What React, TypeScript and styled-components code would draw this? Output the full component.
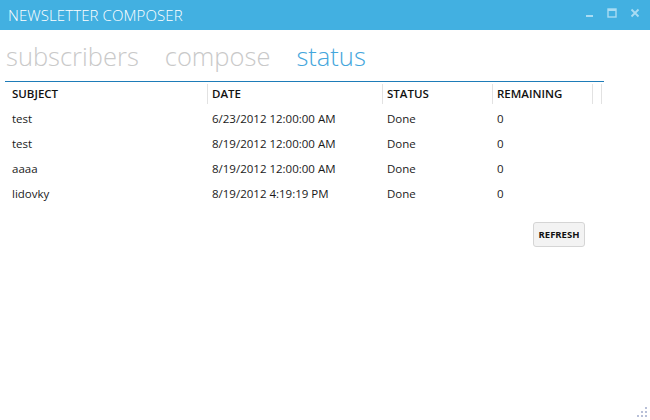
import styled, { createGlobalStyle } from 'styled-components';

const GlobalStyle = createGlobalStyle`
  html, body { margin: 0; padding: 0; background: #fff; }
  body { font-family: "Open Sans", "DejaVu Sans", sans-serif; }
`;

const rows = [
    { subject: 'test', date: '6/23/2012 12:00:00 AM', status: 'Done', remaining: '0' },
    { subject: 'test', date: '8/19/2012 12:00:00 AM', status: 'Done', remaining: '0' },
    { subject: 'aaaa', date: '8/19/2012 12:00:00 AM', status: 'Done', remaining: '0' },
    { subject: 'lidovky', date: '8/19/2012 4:19:19 PM', status: 'Done', remaining: '0' },
];

const columns = ['SUBJECT', 'DATE', 'STATUS', 'REMAINING', ''];

function WindowControls() {
    return <Controls>
        <svg width="10" height="10" viewBox="0 0 10 10">
            <rect x="2" y="7" width="7" height="2" fill="#a9dcf3" />
        </svg>
        <svg width="10" height="10" viewBox="0 0 10 10">
            <rect x="1" y="1" width="8" height="8" fill="none" stroke="#a9dcf3" strokeWidth="1.4" />
            <rect x="1" y="1" width="8" height="2" fill="#a9dcf3" />
        </svg>
        <svg width="10" height="10" viewBox="0 0 10 10">
            <path d="M1.5 1.5 L8.5 8.5 M8.5 1.5 L1.5 8.5" stroke="#a9dcf3" strokeWidth="1.8" />
        </svg>
    </Controls>
}

function ResizeGrip() {
    const dots = [[9, 1], [9, 5], [5, 5], [9, 9], [5, 9], [1, 9]];
    return <Grip width="12" height="12" viewBox="0 0 12 12">
        {dots.map(([x, y], i) => <rect key={i} x={x} y={y} width="2" height="2" fill="#b8c0d8" />)}
    </Grip>
}

export default function App() {
    return <Window>
        <GlobalStyle />
        <TitleBar>
            <Title>NEWSLETTER COMPOSER</Title>
            <WindowControls />
        </TitleBar>
        <Tabs>
            <Tab>subscribers</Tab>
            <Tab>compose</Tab>
            <Tab $active>status</Tab>
        </Tabs>
        <Table>
            <HeaderRow>
                {columns.map((c, i) => <HeaderCell key={i} $first={i === 0}>{c}</HeaderCell>)}
            </HeaderRow>
            {rows.map((r, i) => <Row key={i}>
                <Cell $first>{r.subject}</Cell>
                <Cell>{r.date}</Cell>
                <Cell>{r.status}</Cell>
                <Cell>{r.remaining}</Cell>
                <Cell />
            </Row>)}
        </Table>
        <Actions>
            <RefreshButton>REFRESH</RefreshButton>
        </Actions>
        <ResizeGrip />
    </Window>
}

const Window = styled.div`
  position: relative;
  width: 650px;
  height: 420px;
  background: #fff;
  overflow: hidden;
`

const TitleBar = styled.div`
  height: 30px;
  background: #42b0e1;
  display: flex;
  align-items: center;
  justify-content: space-between;
  padding: 0 10px 0 8px;
`

const Title = styled.div`
  color: #fff;
  font-size: 15px;
  font-weight: 300;
  letter-spacing: 0.1px;
`

const Controls = styled.div`
  display: flex;
  gap: 13px;
  align-items: center;
  margin-top: -4px;
`

const Tabs = styled.div`
  display: flex;
  gap: 26px;
  padding: 9px 0 0 1px;
  height: 42px;
  border-bottom: 1px solid #1e7cb8;
  width: 598px;
  margin-left: 5px;
`

const Tab = styled.div<{ $active?: boolean }>`
  font-size: 25.5px;
  font-weight: 300;
  line-height: 34px;
  color: ${p => p.$active ? '#44a6dc' : '#c9c9c9'};
`

const Table = styled.div`
  margin-left: 5px;
  width: 599px;
`

const HeaderRow = styled.div`
  display: grid;
  grid-template-columns: 203px 175px 110px 100px 9px;
  height: 24px;
  align-items: stretch;
`

const HeaderCell = styled.div<{ $first?: boolean }>`
  font-size: 11.5px;
  font-weight: 600;
  color: #111;
  padding: 2px 0 0 ${p => p.$first ? 7 : 4}px;
  border-right: 1px solid #e2e2e2;
  margin: 2px 0 2px;
`

const Row = styled.div`
  display: grid;
  grid-template-columns: 203px 175px 110px 100px 9px;
  height: 25px;
  align-items: center;
`

const Cell = styled.div<{ $first?: boolean }>`
  font-size: 11.5px;
  color: #1a1a1a;
  padding-left: ${p => p.$first ? 7 : 4}px;
`

const Actions = styled.div`
  display: flex;
  justify-content: flex-end;
  width: 585px;
  margin-top: 16px;
`

const RefreshButton = styled.button`
  width: 52px;
  height: 25px;
  padding: 0;
  background: #f3f3f3;
  border: 1px solid #d5d5d5;
  border-radius: 3px;
  font-family: "Open Sans", "DejaVu Sans", sans-serif;
  font-size: 9.5px;
  font-weight: 700;
  color: #111;
`

const Grip = styled.svg`
  position: absolute;
  right: 2px;
  bottom: 2px;
`
